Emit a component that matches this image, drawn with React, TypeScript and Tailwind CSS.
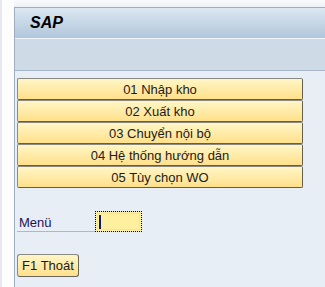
import React from 'react'

const items = ['01 Nhập kho', '02 Xuất kho', '03 Chuyển nội bộ', '04 Hệ thống hướng dẫn', '05 Tùy chọn WO']

function MenuButton({ label }: { label: string }) {
  return (
    <button className="flex h-[22px] w-[286px] items-center justify-center rounded-[2px] border border-[#8a8a82] border-b-[#5f5f58] border-r-[#5f5f58] bg-gradient-to-b from-[#fff6c6] to-[#ffe08a] text-[13px] leading-none text-[#1b1b1b]">
      {label}
    </button>
  )
}

export default function App() {
  return (
    <div className="flex h-[287px] w-[325px] overflow-hidden bg-[#fbfcfd] font-['Liberation_Sans',Arial,sans-serif]">
      <div className="h-full w-[14px] shrink-0 border-l-2 border-l-[#e6eaef] bg-[#fdfdfe]" />
      <div className="flex flex-1 flex-col">
        <div className="h-[7px] bg-gradient-to-b from-[#f9fafc] to-[#eef2f7]" />
        <div className="flex flex-1 flex-col border-l border-t border-[#9eaec2]">
          <div className="flex h-[30px] items-center bg-gradient-to-b from-[#dde8f2] to-[#afc6db] pl-[15px]">
            <span className="text-[16px] font-bold italic leading-none text-black">SAP</span>
          </div>
          <div className="h-px bg-[#f2f6fa]" />
          <div className="h-[32px] border-b border-[#a7b6c8] bg-[#cedbe7]" />
          <div className="flex flex-1 flex-col bg-[#e8eef6] pl-[2px] pt-[7px]">
            <div className="flex flex-col">
              {items.map((t) => (
                <MenuButton key={t} label={t} />
              ))}
            </div>
            <div className="mt-[23px] flex h-[21px] items-stretch">
              <div className="flex w-[78px] items-end border-b border-[#b4b8bd] pb-[2px] pl-[2px] text-[13px] leading-none text-[#1c1450]">
                Menü
              </div>
              <div className="flex w-[47px] items-center border border-dotted border-black bg-[#fff0a0] p-px">
                <div className="flex h-full w-full items-center border border-[#f3e4a0] pl-px">
                  <div className="h-[14px] w-[2px] bg-[#0b1a66]" />
                </div>
              </div>
            </div>
            <div className="mt-[22px]">
              <button className="flex h-[23px] w-[62px] items-center justify-center rounded-[3px] border border-[#8a8a82] border-b-[#66665f] border-r-[#66665f] bg-gradient-to-b from-[#fff6c6] to-[#ffe08a] text-[13px] leading-none text-[#1b1b1b]">
                F1 Thoát
              </button>
            </div>
          </div>
        </div>
      </div>
    </div>
  )
}
